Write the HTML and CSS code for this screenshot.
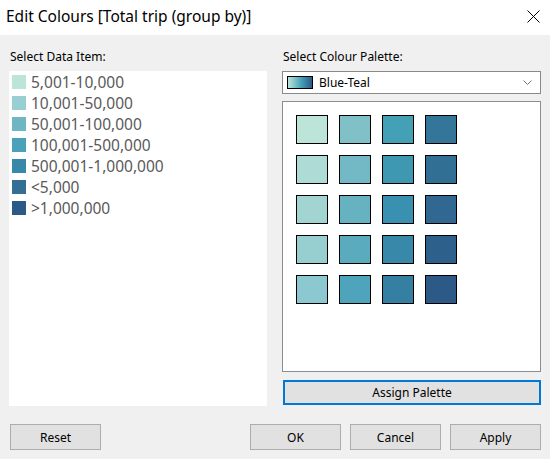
FILE: index.html
```html
<!DOCTYPE html>
<html>
<head>
<meta charset="utf-8">
<link rel="stylesheet" href="styles.css">
</head>
<body>
<div class="dialog">
  <div class="titlebar">
    <span class="title">Edit Colours [Total trip (group by)]</span>
    <svg class="close" width="13" height="13" viewBox="0 0 13 13"><path d="M0.5 0.5L12.5 12.5M12.5 0.5L0.5 12.5" stroke="#000" stroke-width="1"/></svg>
  </div>
  <div class="content">
    <div class="columns">
      <div class="col left">
        <div class="label">Select Data Item:</div>
        <div class="list">
          <div class="item"><span class="sw" style="background:#bce4d8"></span>5,001-10,000</div>
          <div class="item"><span class="sw" style="background:#98cfd2"></span>10,001-50,000</div>
          <div class="item"><span class="sw" style="background:#6fb6c3"></span>50,001-100,000</div>
          <div class="item"><span class="sw" style="background:#4aa2ba"></span>100,001-500,000</div>
          <div class="item"><span class="sw" style="background:#3889a9"></span>500,001-1,000,000</div>
          <div class="item"><span class="sw" style="background:#336f95"></span>&lt;5,000</div>
          <div class="item"><span class="sw" style="background:#2c5985"></span>&gt;1,000,000</div>
        </div>
      </div>
      <div class="col right">
        <div class="label">Select Colour Palette:</div>
        <div class="select">
          <span class="grad"></span>
          <span class="selname">Blue-Teal</span>
          <svg class="chev" width="9" height="5" viewBox="0 0 9 5"><path d="M0.5 0.5L4.5 4.5L8.5 0.5" fill="none" stroke="#707070" stroke-width="1"/></svg>
        </div>
        <div class="palette">
          <div class="grid">
            <span class="cell" style="background:#bde4d9"></span>
            <span class="cell" style="background:#80c1c8"></span>
            <span class="cell" style="background:#44a0b5"></span>
            <span class="cell" style="background:#34769a"></span>
            <span class="cell" style="background:#aedbd5"></span>
            <span class="cell" style="background:#73b9c5"></span>
            <span class="cell" style="background:#3e98b2"></span>
            <span class="cell" style="background:#326f95"></span>
            <span class="cell" style="background:#a2d5d2"></span>
            <span class="cell" style="background:#67b2c1"></span>
            <span class="cell" style="background:#3990b0"></span>
            <span class="cell" style="background:#306891"></span>
            <span class="cell" style="background:#97cfd1"></span>
            <span class="cell" style="background:#5babbe"></span>
            <span class="cell" style="background:#3788a9"></span>
            <span class="cell" style="background:#2e608c"></span>
            <span class="cell" style="background:#8bc8cf"></span>
            <span class="cell" style="background:#4ea5bb"></span>
            <span class="cell" style="background:#357fa2"></span>
            <span class="cell" style="background:#2c5985"></span>
          </div>
        </div>
        <button class="btn assign">Assign Palette</button>
      </div>
    </div>
    <div class="footer">
      <button class="btn">Reset</button>
      <div class="spacer"></div>
      <button class="btn">OK</button>
      <button class="btn">Cancel</button>
      <button class="btn">Apply</button>
    </div>
  </div>
</div>
</body>
</html>
```
FILE: styles.css
```css
html, body {
  margin: 0;
  padding: 0;
}
body {
  width: 550px;
  height: 459px;
  overflow: hidden;
  font-family: "Noto Sans", "Open Sans", sans-serif;
  color: #000;
}
.dialog {
  width: 550px;
  height: 459px;
  display: flex;
  flex-direction: column;
  background: #f0f0f0;
}
.titlebar {
  height: 35px;
  background: #fff;
  display: flex;
  align-items: center;
  padding: 0 10px 0 6px;
  box-sizing: border-box;
}
.title {
  font-size: 15.5px;
  flex: 1;
  margin-top: -3px;
}
.close {
  margin-top: -3px;
}
.content {
  flex: 1;
  display: flex;
  flex-direction: column;
  padding: 14px 9px 8px 9px;
}
.columns {
  display: flex;
  gap: 15px;
}
.col {
  display: flex;
  flex-direction: column;
}
.left {
  width: 258px;
}
.right {
  width: 259px;
}
.label {
  font-size: 12px;
  line-height: 16px;
  height: 16px;
  margin-bottom: 6px;
  padding-left: 1px;
}
.list {
  background: #fff;
  height: 335px;
  padding-top: 0;
  box-sizing: border-box;
}
.item {
  display: flex;
  align-items: center;
  height: 21px;
  font-size: 15.5px;
  color: #5a5a5a;
  padding-left: 3px;
}
.sw {
  width: 14px;
  height: 14px;
  margin-right: 5px;
  flex: none;
}
.select {
  height: 23px;
  background: #fff;
  border: 1px solid #8a8a8a;
  box-sizing: border-box;
  display: flex;
  align-items: center;
  padding-left: 4px;
  padding-right: 8px;
}
.grad {
  width: 26px;
  height: 13px;
  box-sizing: border-box;
  border: 1px solid #000;
  background: linear-gradient(to right, #bce4d8, #45a1b8 55%, #2c5985);
  margin-right: 6px;
}
.selname {
  font-size: 12px;
  flex: 1;
}
.palette {
  margin-top: 7px;
  height: 271px;
  background: #fff;
  border: 1px solid #8a8d92;
  box-sizing: border-box;
  padding: 13px 0 0 13px;
}
.grid {
  display: grid;
  grid-template-columns: repeat(4, 32px);
  grid-auto-rows: 29px;
  column-gap: 11px;
  row-gap: 11px;
}
.cell {
  border: 1px solid #000;
  box-sizing: border-box;
}
.btn {
  width: 91px;
  height: 26px;
  background: #e1e1e1;
  border: 1px solid #adadad;
  font-family: "Noto Sans", "Open Sans", sans-serif;
  font-size: 12px;
  color: #000;
  padding: 0;
  box-sizing: border-box;
}
.assign {
  margin-top: 8px;
  margin-left: 1px;
  width: 258px;
  height: 25px;
  border: 2px solid #0078d7;
}
.footer {
  display: flex;
  gap: 9px;
  margin-top: 18px;
  padding-left: 1px;
}
.spacer {
  flex: 1;
}
```
